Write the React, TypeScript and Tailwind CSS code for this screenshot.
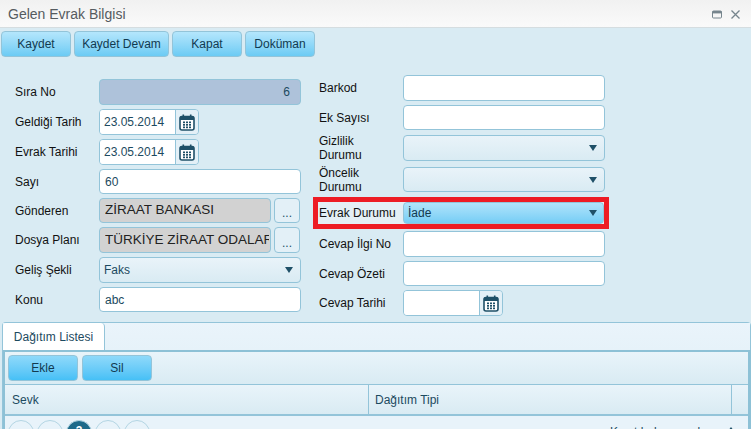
import React from 'react';

const label = 'w-[84px] shrink-0 text-[12px] leading-[14px] text-[#111]';
const whiteInput = 'h-full flex-1 rounded-[4px] border border-[#93c4d9] bg-white px-[5px] flex items-center text-[12px] text-[#1c4a60]';
const bevel = 'rounded-[4px] border border-[#93c4d9] bg-gradient-to-b text-[12px] text-[#123a50] flex items-center justify-center';
const topBtn = `${bevel} from-[#b4e6fc] to-[#6bcbf4] h-[26px]`;
const listBtn = `${bevel} from-[#8ed9fa] to-[#45c0f6] h-[26px] w-[70px]`;

const CalendarIcon = () => (
  <svg width="16" height="17" viewBox="0 0 16 17" fill="none">
    <rect x="1" y="2.5" width="14" height="13.5" rx="2" fill="#fff" stroke="#1f5068" strokeWidth="1.6" />
    <rect x="1" y="2.5" width="14" height="3.5" fill="#1f5068" />
    <rect x="3.5" y="0.5" width="1.6" height="3" fill="#1f5068" />
    <rect x="10.9" y="0.5" width="1.6" height="3" fill="#1f5068" />
    {[4, 7, 10].map((x) =>
      [7.5, 10, 12.5].map((y) => <rect key={`${x}-${y}`} x={x} y={y} width="2" height="1.7" fill="#1f5068" />)
    )}
  </svg>
);

const Row = ({ title, className, children }: { title: React.ReactNode; className: string; children?: React.ReactNode }) => (
  <div className={`flex items-center ${className}`}>
    <div className={label}>{title}</div>
    {children ?? <div className={whiteInput} />}
  </div>
);

const DateField = ({ value }: { value?: string }) => (
  <div className="flex h-full w-[100px] overflow-hidden rounded-[4px] border border-[#93c4d9]">
    <div className="flex-1 bg-white pl-[4px] flex items-center text-[12px] text-[#1c4a60]">{value}</div>
    <div className="w-[23px] border-l border-[#93c4d9] bg-[#e3f0f7] flex items-center justify-center">
      <CalendarIcon />
    </div>
  </div>
);

const SelectField = ({ value, active }: { value?: string; active?: boolean }) => (
  <div
    className={`h-full flex-1 rounded-[4px] border border-[#93c4d9] flex items-center justify-between pl-[4px] text-[12px] ${
      active ? 'pr-[6px] bg-gradient-to-b from-[#b0e4fb] to-[#75cdf5] text-[#123a50]' : 'pr-[7px] bg-gradient-to-b from-[#e9f3f9] to-[#d9ebf3] text-[#1c4a60]'
    }`}
  >
    <span>{value}</span>
    <span className="h-0 w-0 border-x-[4px] border-t-[6px] border-x-transparent border-t-[#1f5068]" />
  </div>
);

const Lookup = ({ value }: { value: string }) => (
  <div className="flex h-full flex-1 gap-[3px]">
    <div className="w-[172px] shrink-0 rounded-[4px] border border-[#93c4d9] bg-[#d2d2d2] pl-[5px] pr-[1px] flex items-center text-[13.5px] text-[#222]">
      <span className="overflow-hidden whitespace-nowrap">{value}</span>
    </div>
    <div className="w-[26px] shrink-0 rounded-[4px] border border-[#93c4d9] bg-[#e3f0f7] flex items-end justify-center pb-[3px] text-[12px] leading-[12px] text-[#1f5068]">
      ...
    </div>
  </div>
);

const pageCircle = 'w-[26px] h-[26px] shrink-0 rounded-full border border-[#b3d5e3]';

export default function App() {
  return (
    <div className="relative h-[429px] w-[751px] overflow-hidden bg-[#d9ebf3] font-['Liberation_Sans',Arial,sans-serif]">
      <div className="flex h-[28px] items-center justify-between border-b border-[#d5dde0] bg-gradient-to-b from-[#f1f1f1] to-[#fafafa] pl-[8px] pr-[11px] pt-[1px] text-[14px] text-[#555b60]">
        <span>Gelen Evrak Bilgisi</span>
        <div className="flex items-center gap-[9px]">
          <svg width="10" height="9" viewBox="0 0 10 9" fill="none">
            <rect x="0.5" y="1" width="9" height="7" rx="1" stroke="#76858d" />
            <rect x="0.5" y="1" width="9" height="2.4" fill="#76858d" />
          </svg>
          <svg width="9" height="9" viewBox="0 0 9 9" stroke="#76858d" strokeWidth="1.3">
            <path d="M0.5 0.5 L8.5 8.5 M8.5 0.5 L0.5 8.5" />
          </svg>
        </div>
      </div>

      <div className="flex gap-[3px] pl-[1px] pt-[3px]">
        <button className={`${topBtn} w-[70px]`}>Kaydet</button>
        <button className={`${topBtn} w-[95px]`}>Kaydet Devam</button>
        <button className={`${topBtn} w-[70px]`}>Kapat</button>
        <button className={`${topBtn} w-[70px]`}>Doküman</button>
      </div>

      <div className="flex h-[265px] gap-[18px] pl-[15px]">
        <div className="flex w-[286px] flex-col pt-[22px]">
          <Row title="Sıra No" className="h-[26px]">
            <div className="flex h-full flex-1 items-center justify-end rounded-[4px] border border-[#93c4d9] bg-[#aec2da] pr-[10px] text-[12px] text-[#1c4a60]">6</div>
          </Row>
          <Row title="Geldiği Tarih" className="mt-[4px] h-[26px]"><DateField value="23.05.2014" /></Row>
          <Row title="Evrak Tarihi" className="mt-[4px] h-[26px]"><DateField value="23.05.2014" /></Row>
          <Row title="Sayı" className="mt-[4px] h-[25px]"><div className={whiteInput}>60</div></Row>
          <Row title="Gönderen" className="mt-[4px] h-[25px]"><Lookup value="ZİRAAT BANKASI" /></Row>
          <Row title="Dosya Planı" className="mt-[4px] h-[26px]"><Lookup value="TÜRKİYE ZİRAAT ODALARI BİRLİĞİ" /></Row>
          <Row title="Geliş Şekli" className="mt-[4px] h-[26px]"><SelectField value="Faks" /></Row>
          <Row title="Konu" className="mt-[4px] h-[25px]"><div className={whiteInput}>abc</div></Row>
        </div>

        <div className="flex w-[286px] flex-col pt-[18px]">
          <Row title="Barkod" className="h-[26px]" />
          <Row title="Ek Sayısı" className="mt-[4px] h-[25px]" />
          <Row title={<>Gizlilik<br />Durumu</>} className="mt-[5px] h-[26px]"><SelectField /></Row>
          <Row title={<>Öncelik<br />Durumu</>} className="mt-[6px] h-[25px]"><SelectField /></Row>
          <div className="-ml-[6px] mt-[5px] h-[32px] w-[296px] border-[5px] border-[#ed1c24] bg-[#e4eff5] pl-[1px]">
            <Row title="Evrak Durumu" className="h-full"><SelectField value="İade" active /></Row>
          </div>
          <Row title="Cevap İlgi No" className="mt-[2px] h-[26px]" />
          <Row title="Cevap Özeti" className="mt-[4px] h-[25px]" />
          <Row title="Cevap Tarihi" className="mt-[4px] h-[26px]"><DateField /></Row>
        </div>
      </div>

      <div className="ml-[2px] h-[107px] rounded-t-[4px] border border-b-0 border-[#93c4d9]">
        <div className="flex h-[27px] bg-gradient-to-b from-[#eaf4fb] to-[#e6f2f9]">
          <div className="flex w-[102px] items-center justify-center rounded-t-[4px] border-r border-[#93c4d9] bg-white pt-[1px] text-[12px] text-[#1c4a60]">Dağıtım Listesi</div>
        </div>
        <div className="-mr-[1px] h-[80px] border-l-[2px] border-r-[3px] border-t-[2px] border-[#8dc1d6]">
          <div className="flex h-[33px] gap-[4px] border-b border-[#93c4d9] bg-gradient-to-b from-[#e9f4fa] to-[#d9ebf3] pl-[3px] pt-[3px]">
            <button className={listBtn}>Ekle</button>
            <button className={listBtn}>Sil</button>
          </div>
          <div className="flex h-[31px] border-b-[2px] border-[#93c4d9] bg-gradient-to-b from-[#e9f4fa] to-[#d9ebf3] text-[12px] text-[#1c4a60]">
            <div className="flex w-[364px] items-center border-r border-[#93c4d9] pl-[7px]">Sevk</div>
            <div className="flex w-[363px] items-center border-r border-[#93c4d9] pl-[6px]">Dağıtım Tipi</div>
          </div>
          <div className="relative flex h-[20px] items-start bg-[#e8f3fa] pl-[3px] pt-[4px]">
            <div className="flex gap-[3px]">
              <div className={pageCircle} />
              <div className={pageCircle} />
              <div className={`${pageCircle} flex justify-center bg-[#1d6a8a] text-[12px] font-bold leading-[20px] text-white`}>3</div>
              <div className={pageCircle} />
              <div className={pageCircle} />
            </div>
            <span className="absolute left-[605px] top-[9px] text-[12px] leading-[14px] text-[#1c4a60]">Kayıt bulunamadı</span>
            <span className="absolute left-[723px] top-[11px] h-0 w-0 border-x-[3px] border-b-[4px] border-x-transparent border-b-[#1f5068]" />
          </div>
        </div>
      </div>
    </div>
  );
}
